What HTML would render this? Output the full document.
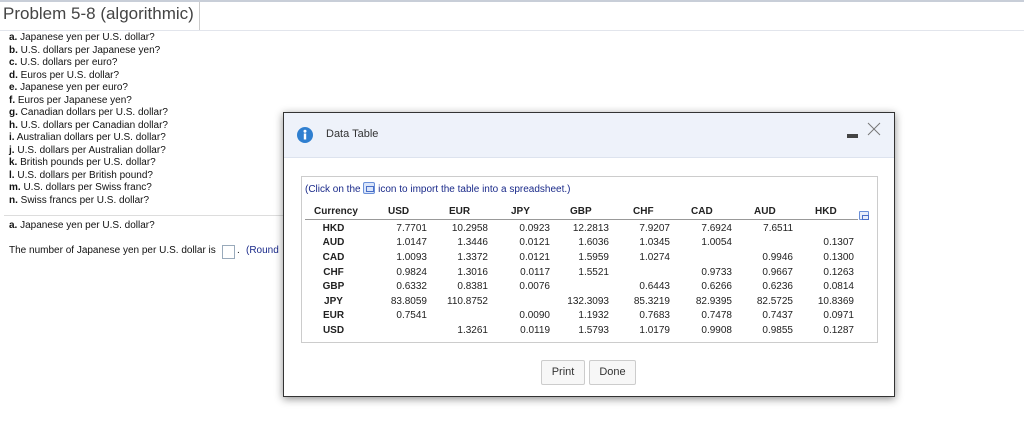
<!DOCTYPE html>
<html><head><meta charset="utf-8"><style>
*{margin:0;padding:0;box-sizing:border-box}
body{width:1024px;height:435px;background:#fff;font-family:"Liberation Sans",Arial,sans-serif;position:relative;overflow:hidden;color:#111}
.a{position:absolute;white-space:nowrap}
.ql{font-size:10px;line-height:12.5px}
.dlg{position:absolute;left:283px;top:112px;width:612px;height:285px;border:1px solid #333;background:#fff;box-shadow:0 2px 8px rgba(0,0,0,.45)}
.hdr{position:absolute;left:0;top:0;width:100%;height:45px;background:#eef2fa;border-bottom:1px solid #dde3ee}
.box{position:absolute;left:17px;top:63px;width:577px;height:167px;border:1px solid #ccc}
td{font-size:10px;color:#222}
.btn{position:absolute;top:247px;height:25px;border:1px solid #ccc;border-radius:2px;background:#f7f7f7;font-size:11px;color:#333;text-align:center;line-height:23px}
.ic{display:inline-block;width:12px;height:12px;border:1px solid #6a8fd8;border-radius:2px;background:#dbe6fa;position:relative;vertical-align:-2px}
.ic:after{content:"";position:absolute;left:2px;top:3px;width:6px;height:4px;border:1px solid #4a6fc8}
.ic2{display:inline-block;width:10px;height:9px;border:1px solid #6a8fd8;border-radius:1px;background:#e8eefb;position:relative}
.ic2:after{content:"";position:absolute;left:2px;top:3px;width:5px;height:3px;border:1px solid #4a6fc8}
</style></head><body>
<div class="a" style="left:0;top:0;width:1024px;height:2px;background:#c8ced8"></div>
<div class="a" style="left:3px;top:4px;font-size:17px;color:#444">Problem 5-8 (algorithmic)</div>
<div class="a" style="left:199px;top:2px;width:1px;height:28px;background:#ccc"></div>
<div class="a" style="left:0;top:30px;width:1024px;height:1px;background:#e2e5ec"></div>
<div class="a ql" style="left:9px;top:32px">
<b>a.</b> Japanese yen per U.S. dollar?<br><b>b.</b> U.S. dollars per Japanese yen?<br><b>c.</b> U.S. dollars per euro?<br><b>d.</b> Euros per U.S. dollar?<br><b>e.</b> Japanese yen per euro?<br><b>f.</b> Euros per Japanese yen?<br><b>g.</b> Canadian dollars per U.S. dollar?<br><b>h.</b> U.S. dollars per Canadian dollar?<br><b>i.</b> Australian dollars per U.S. dollar?<br><b>j.</b> U.S. dollars per Australian dollar?<br><b>k.</b> British pounds per U.S. dollar?<br><b>l.</b> U.S. dollars per British pound?<br><b>m.</b> U.S. dollars per Swiss franc?<br><b>n.</b> Swiss francs per U.S. dollar?</div>
<div class="a" style="left:4px;top:215px;width:280px;height:1px;background:#ddd"></div>
<div class="a ql" style="left:9px;top:220px"><b>a.</b> Japanese yen per U.S. dollar?</div>
<div class="a ql" style="left:9px;top:245px">The number of Japanese yen per U.S. dollar is</div>
<div class="a" style="left:222px;top:245px;width:13px;height:14px;border:1px solid #9ab"></div>
<div class="a ql" style="left:237px;top:245px">.</div>
<div class="a ql" style="left:246px;top:245px;color:#1a2a8a">(Round</div>
<div class="dlg">
<div class="hdr"></div>
<svg class="a" style="left:13px;top:14px" width="16" height="16"><circle cx="8" cy="8" r="8" fill="#2f7fd0"/><circle cx="8" cy="4.3" r="1.5" fill="#fff"/><rect x="6.8" y="6.5" width="2.4" height="6" fill="#fff"/></svg>
<div class="a" style="left:42px;top:15px;font-size:11px;color:#333">Data Table</div>
<div class="a" style="left:563px;top:21px;width:11px;height:4px;background:#444"></div>
<svg class="a" style="left:583px;top:9px" width="14" height="14"><path d="M1 1L13 13M13 1L1 13" stroke="#777" stroke-width="1"/></svg>
<div class="box">
<div class="a" style="left:3px;top:5px;font-size:10px;color:#1a2a8a">(Click on the <span class="ic"></span> icon to import the table into a spreadsheet.)</div>
<div class="a" style="left:3px;top:42px;width:553px;height:1px;background:#999"></div>
<span class="ic2 a" style="left:557px;top:30px"></span>
<table class="a" style="left:-2px;top:26px;border-collapse:collapse">
<colgroup><col style="width:67px"><col style="width:60px"><col style="width:61px"><col style="width:62px"><col style="width:59px"><col style="width:61px"><col style="width:62px"><col style="width:61px"><col style="width:61px"></colgroup>
<tr style="height:16px;font-weight:bold"><td style="padding-left:14px">Currency</td><td style="padding-left:21px">USD</td><td style="padding-left:22px">EUR</td><td style="padding-left:23px">JPY</td><td style="padding-left:20px">GBP</td><td style="padding-left:24px">CHF</td><td style="padding-left:21px">CAD</td><td style="padding-left:22px">AUD</td><td style="padding-left:22px">HKD</td></tr>
</table>
<table class="a" style="left:-2px;top:44px;border-collapse:collapse;text-align:right">
<colgroup><col style="width:67px"><col style="width:60px"><col style="width:61px"><col style="width:62px"><col style="width:59px"><col style="width:61px"><col style="width:62px"><col style="width:61px"><col style="width:61px"></colgroup>
<tr style="height:14.6px"><td style="text-align:center;font-weight:bold">HKD</td><td>7.7701</td><td>10.2958</td><td>0.0923</td><td>12.2813</td><td>7.9207</td><td>7.6924</td><td>7.6511</td><td></td></tr>
<tr style="height:14.6px"><td style="text-align:center;font-weight:bold">AUD</td><td>1.0147</td><td>1.3446</td><td>0.0121</td><td>1.6036</td><td>1.0345</td><td>1.0054</td><td></td><td>0.1307</td></tr>
<tr style="height:14.6px"><td style="text-align:center;font-weight:bold">CAD</td><td>1.0093</td><td>1.3372</td><td>0.0121</td><td>1.5959</td><td>1.0274</td><td></td><td>0.9946</td><td>0.1300</td></tr>
<tr style="height:14.6px"><td style="text-align:center;font-weight:bold">CHF</td><td>0.9824</td><td>1.3016</td><td>0.0117</td><td>1.5521</td><td></td><td>0.9733</td><td>0.9667</td><td>0.1263</td></tr>
<tr style="height:14.6px"><td style="text-align:center;font-weight:bold">GBP</td><td>0.6332</td><td>0.8381</td><td>0.0076</td><td></td><td>0.6443</td><td>0.6266</td><td>0.6236</td><td>0.0814</td></tr>
<tr style="height:14.6px"><td style="text-align:center;font-weight:bold">JPY</td><td>83.8059</td><td>110.8752</td><td></td><td>132.3093</td><td>85.3219</td><td>82.9395</td><td>82.5725</td><td>10.8369</td></tr>
<tr style="height:14.6px"><td style="text-align:center;font-weight:bold">EUR</td><td>0.7541</td><td></td><td>0.0090</td><td>1.1932</td><td>0.7683</td><td>0.7478</td><td>0.7437</td><td>0.0971</td></tr>
<tr style="height:14.6px"><td style="text-align:center;font-weight:bold">USD</td><td></td><td>1.3261</td><td>0.0119</td><td>1.5793</td><td>1.0179</td><td>0.9908</td><td>0.9855</td><td>0.1287</td></tr>
</table>
</div>
<div class="btn" style="left:257px;width:44px">Print</div>
<div class="btn" style="left:305px;width:47px">Done</div>
</div>
</body></html>
